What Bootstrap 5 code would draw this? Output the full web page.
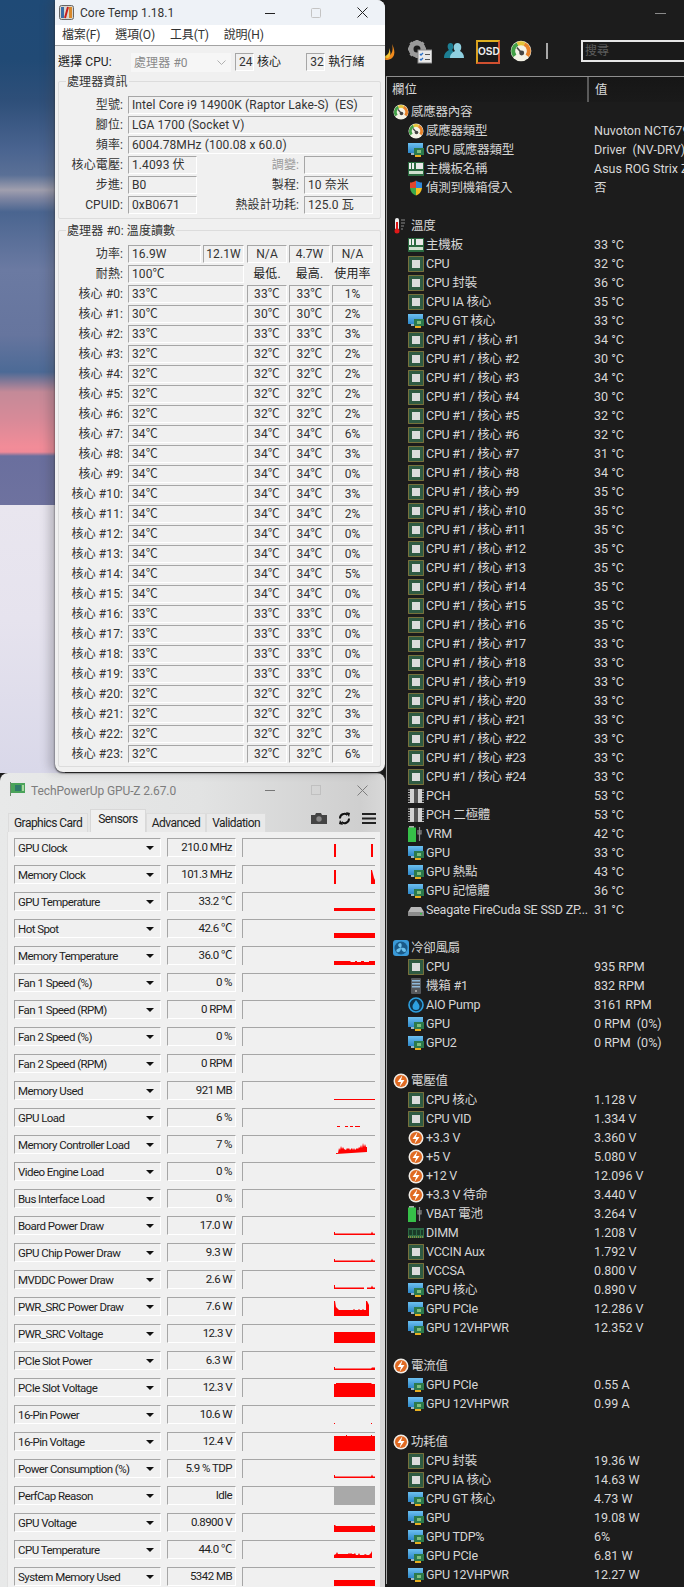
<!DOCTYPE html>
<html lang="zh-Hant">
<head>
<meta charset="utf-8">
<title>Core Temp / GPU-Z / HWiNFO</title>
<link href="https://cdn.jsdelivr.net/npm/bootstrap@5.3.0/dist/css/bootstrap.min.css" rel="stylesheet">
<style>
html,body{margin:0;height:1587px;overflow:hidden;background:#1c1c1c}
body{font-family:Roboto,"Noto Sans CJK TC",sans-serif;font-size:12px;line-height:18px;color:#222}
.svg-defs{position:absolute;width:0;height:0}
.desk{width:684px;height:1587px;overflow:hidden}
.leftcol{width:385px;flex:none;background-color:#1c1c1c;
 background-image:linear-gradient(180deg,#1f4a76 0,#214a75 60px,#2e4f79 100px,#4a6490 150px,#5a7096 175px,#a09fae 190px,#7f86a2 198px,#4a6590 212px,#6b7aa2 270px,#66759e 335px,#4c6a96 372px,#c48a98 392px,#d88a98 420px,#f28c98 447px,#f08a98 452px,#6a6f9e 456px,#6e729f 505px,#e9e6ef 505px,#e6e3ee 620px,#d9d8e9 773px);
 background-size:65px 773px;background-repeat:no-repeat}
/* Core Temp */
.ct-win{margin-left:55px;width:330px;height:772px;flex:none;background:#f0f0f0;border-radius:0 0 8px 8px;border-top-right-radius:8px;box-shadow:-6px 0 10px rgba(60,60,70,.28),0 1px 2px #222;overflow:hidden;position:relative;z-index:1;letter-spacing:.1px}
.ct-title{height:25px;background:#eef2f7;padding-left:4px}
.ct-title .ttl{margin-left:6px;font-size:12px;color:#333;letter-spacing:0}
.winbtn{width:46px;height:25px}
.ct-menu{height:21px;background:#fff;border-bottom:1px solid #a3a3a3;padding-left:7px;gap:15px;color:#333;letter-spacing:-.15px}
.cpu-sel{padding:7px 0 0 3px;height:36px}
.ctl-name{width:73px}
.fake-select{width:100px;height:19px;background:#f6f6f6;color:#8a8a8a;padding-left:3px;margin-right:4px}
.fake-select svg{margin-right:5px}
.sk{background:#f0f0f0;border-top:1px solid #a6a6a6;border-left:1px solid #a6a6a6;border-bottom:1px solid #fff;border-right:1px solid #fff;height:18px;line-height:16px;white-space:nowrap;overflow:hidden;padding-left:3px;color:#333}
.mini{width:19px;margin-right:3px;padding-left:3px}
.grp{border:1px solid #dcdcdc;border-radius:2px;margin:0 4px 0 3px;width:323px}
.grp-a{height:138px;margin-top:-1px}
.grp-b{height:537px;margin-top:11px}
.legend-t{display:block;width:max-content;margin:-9px 0 0 7px;padding:0 1px;background:#f0f0f0;height:18px;color:#333}
.ct-row{display:flex;height:18px;margin-bottom:2px}
.ct-rows-a{padding-top:5px}
.ct-rows-b{padding-top:5px}
.ct-lab{width:64px;text-align:right;margin-right:5px;flex:none;white-space:nowrap;color:#333}
.w245{width:245px}.w69{width:69px}.w116{width:116px}.w73{width:73px}.w41{width:41px}.w40{width:40px}
.gl3{margin-left:3px}.gl2{margin-left:2px}
.rlab{width:107px;text-align:right;padding-right:5px;color:#333}
.ctr{text-align:center;padding-left:0}
.plain{background:none;border:none;text-align:center;padding:0}
.dim{color:#9b9b9b}
.gap-thr{margin-left:25px}
/* GPU-Z */
.gz-win{width:385px;flex:none;margin-top:1px;height:814px;border-radius:8px 8px 0 0;background:linear-gradient(90deg,#e8e9e9 0,#e2e3e3 200px,#cfcfcf 360px,#d8d8d8 385px);overflow:hidden;position:relative;font-size:11.5px;letter-spacing:-.55px}
.gz-title{height:36px;padding:9px 0 0 10px;color:#7d7d7d;font-size:12px;letter-spacing:-.1px}
.gz-title .ttl{margin-left:6px}
.gz-title .ctl{margin-left:auto}
.gz-title .wb{width:46px;height:16px;display:flex;justify-content:center;align-items:center}
.gz-tabs{height:23px;padding-left:8px;border:none;align-items:flex-end;flex-wrap:nowrap}
.gz-tabs .nav-link{padding:0 5px;height:19px;border:1px solid #dcdcdc;border-bottom:none;border-radius:0;background:#e9e9e9;color:#222;margin:0;font-size:12px;line-height:18px}
.gz-tabs .nav-link.active{height:23px;line-height:19px;background:#f0f0f0;color:#222;border-color:#d8d8d8;padding:0 7px;margin-left:2px}
.gz-tabs .tab-w{padding:0 5px}
.gz-tools{margin-left:auto;gap:11px;padding-right:9px;height:23px;padding-bottom:5px}
.gz-panel{margin:0 5px 0 7px;height:760px;background:#f0f0f0;padding:6px 0 0 6px;border-left:1px solid #e0e0e0}
.gz-row{display:flex;height:19px;margin-bottom:8px}
.gb{background:#f0f0f0;border-top:1px solid #a6a6a6;border-left:1px solid #a6a6a6;border-bottom:1px solid #fff;border-right:1px solid #fff;height:19px;line-height:16px;white-space:nowrap;overflow:hidden;color:#222}
.gb-l{width:147px;padding:0 6px 0 3px;display:flex;align-items:center;justify-content:space-between}
.gb-v{width:69px;margin-left:6px;text-align:right;padding-right:3px}
.gb-g{width:133px;margin-left:6px;border-right:none;border-bottom:none}
.gb-g svg{display:block}
.tri{width:0;height:0;border-left:4px solid transparent;border-right:4px solid transparent;border-top:4px solid #111;flex:none}
/* HW panel */
.hw{width:299px;flex:none;background:#1c1c1c;color:#d8d8d8;overflow:hidden;height:1587px;font-size:12.5px}
.hw-min{height:40px;padding:12px 18px 0 0;justify-content:flex-end}
.hw-tool{height:36px}
.hw-tool svg{flex:none;display:block}
.tool-gear{margin-left:13px}
.tool-team{margin-left:12px}
.tool-gauge{margin-left:10px}
.tool-osd{width:24px;height:24px;margin-left:12px;border:2px solid;border-color:#e0b020 #d05030 #d05030 #d8a020;background:#1a1a1a;color:#eee;font-family:"Liberation Sans",sans-serif;font-weight:700;font-size:10px;line-height:20px;text-align:center}
.tool-sep{width:2px;height:16px;background:#a8a8a8;margin:3px 0 0 14px}
.hw-search{width:103px;height:22px;min-height:0;margin-left:33px;padding:0 2px;background:#1a1a1a;border:2px solid #e6e6e6;border-right:none;border-radius:0;font-size:12px;color:#888;font-family:inherit}
.hw-search::placeholder{color:#5c5c5c;opacity:1}
.hw-list{margin-left:1px;border-left:1px solid #a8a8a8;border-top:1px solid #8e8e8e}
.hw-head{height:25px;background:linear-gradient(#161616,#1a1a1a);line-height:25px}
.hw-head .c1{width:202px;padding-left:5px;border-right:2px solid #5a5a5a}
.hw-head .c2{padding-left:6px}
.hw-row{display:flex;height:19px;line-height:19px;white-space:nowrap}
.hw-n{width:207px;flex:none;display:flex;align-items:center;padding-left:21px;overflow:hidden;color:#d6d6d6;letter-spacing:-.22px}
.hw-n svg{width:16px;height:16px;margin-right:2px;flex:none}
.hw-g .hw-n{padding-left:6px}
.hw-v{color:#d8d8d8}
</style>
</head>
<body>
<svg class="svg-defs" aria-hidden="true">
<defs>
<linearGradient id="gm" x1="0" y1="0" x2="0" y2="1"><stop offset="0" stop-color="#6cc0f0"/><stop offset="1" stop-color="#2c86c8"/></linearGradient>
</defs>
<symbol id="i-cpu" viewBox="0 0 16 16"><rect x=".5" y=".5" width="15" height="15" fill="#2f5a42" stroke="#c9a84a" stroke-dasharray="1 1"/><rect x="4" y="4" width="8" height="8" fill="#dcdcdc"/></symbol>
<symbol id="i-gpu" viewBox="0 0 16 16"><rect x="0" y="1" width="15" height="10" fill="url(#gm)"/><rect x="3" y="11" width="5" height="2" fill="#9db4c4"/><rect x="6" y="6" width="10" height="7" fill="#2c7a4c"/><rect x="9" y="8" width="4" height="3" fill="#7fbf7f"/><rect x="7" y="13" width="6" height="2" fill="#e8b020"/></symbol>
<symbol id="i-mobo" viewBox="0 0 16 16"><rect y="1" width="16" height="14" fill="#2b6a40"/><rect x="1" y="2" width="2" height="6" fill="#eee"/><rect x="4" y="2" width="2" height="6" fill="#eee"/><rect x="8" y="2" width="7" height="6" fill="#e8e8e8"/><rect x="1" y="10" width="14" height="3" fill="#cfe0cf"/></symbol>
<symbol id="i-sensor" viewBox="0 0 16 16"><circle cx="8" cy="8" r="7.500" fill="#f4f2e6"/><path d="M3.500 11.500A5.600 5.600 0 0 1 5.500 3" fill="none" stroke="#43a047" stroke-width="2.800"/><path d="M5.500 3a5.600 5.600 0 0 1 5 0" fill="none" stroke="#e4c43a" stroke-width="2.800"/><path d="M10.500 3a5.600 5.600 0 0 1 2 8.500" fill="none" stroke="#e8832a" stroke-width="2.800"/><path d="M8.500 9.500 5 5.500" stroke="#444" stroke-width="1.200"/><circle cx="8.500" cy="9.500" r="1.800" fill="#444"/></symbol>
<symbol id="i-shield" viewBox="0 0 16 16"><path d="M2 2.500c2 0 4-.6 6-2v7.500H2z" fill="#e2452c"/><path d="M8 .5c2 1.400 4 2 6 2V8H8z" fill="#2f86d8"/><path d="M2 8h6v7.500C5 14.500 2.500 12 2 8z" fill="#3aa84a"/><path d="M8 8h6c-.5 4-3 6.500-6 7.500z" fill="#f2c020"/></symbol>
<symbol id="i-therm" viewBox="0 0 16 16"><rect x="2" y="0" width="4" height="12" rx="2" fill="#eee"/><rect x="3" y="4" width="2" height="9" fill="#e01818"/><circle cx="4" cy="13" r="2.500" fill="#e01818"/><path d="M8 2h4M8 5h4M8 8h3M8 11h2" stroke="#888" stroke-width="1"/></symbol>
<symbol id="i-pch" viewBox="0 0 16 16"><path d="M0 2h16M0 4.500h16M0 7h16M0 9.500h16M0 12h16M0 14.500h16" stroke="#bbb"/><rect x="2" y="1" width="12" height="14" fill="#d2d2d2"/><rect x="6" y="1" width="4" height="14" fill="#555"/></symbol>
<symbol id="i-batt" viewBox="0 0 16 16"><rect x="1" y="0" width="5" height="2" fill="#aaa"/><rect x="0" y="1.500" width="8" height="14.500" fill="#36c048"/><path d="M11.500 1v14M10 4v4h3V4" stroke="#8a8a8a" stroke-width="1.200" fill="none"/></symbol>
<symbol id="i-fan" viewBox="0 0 16 16"><rect width="16" height="16" rx="3" fill="#3a9ad8"/><circle cx="8" cy="8" r="6.500" fill="#1a5a88"/><path d="M8 8C5 7 4 4 7 3c2 0 2 3 1 5zM8 8c3-1 5 0 5 3-1 2-4 1-5-3zM8 8c0 3-2 5-4 4-2-2 1-4 4-4z" fill="#6cc0ec"/></symbol>
<symbol id="i-case" viewBox="0 0 16 16"><rect x="3" y="0" width="10" height="16" rx="1" fill="#55585c"/><rect x="4" y="2" width="8" height="1.500" fill="#8fb8d8"/><rect x="4" y="5" width="8" height="1.500" fill="#8fb8d8"/><rect x="4" y="8" width="8" height="1.500" fill="#8fb8d8"/><circle cx="8" cy="13" r="1" fill="#bbb"/></symbol>
<symbol id="i-drop" viewBox="0 0 16 16"><circle cx="8" cy="8" r="7" fill="#11334a" stroke="#2ea0e0" stroke-width="1.600"/><path d="M8 3c2 3 3.500 4.500 3.500 6.500a3.500 3.500 0 0 1-7 0C4.500 7.500 6 6 8 3z" fill="#2ea0e0"/></symbol>
<symbol id="i-ssd" viewBox="0 0 16 16"><path d="M3 5h10l3 5v4H0v-4z" fill="#b8b8b8"/><rect x="0" y="10" width="16" height="4" fill="#8c8c8c"/><rect x="12" y="11" width="2" height="1.500" fill="#36c048"/></symbol>
<symbol id="i-volt" viewBox="0 0 16 16"><circle cx="8" cy="8" r="7.500" fill="#f0ece6"/><circle cx="8" cy="8" r="6" fill="#e06a22"/><path d="M9.500 2 4.500 9H8l-1.500 5 5-7H8z" fill="#fff"/></symbol>
<symbol id="i-dimm" viewBox="0 0 16 16"><rect y="3" width="16" height="10" fill="#2c6a44"/><path d="M1 5h3v5H1zM5 5h3v5H5zM9 5h3v5H9zM13 5h2v5h-2z" fill="#1a3a28"/><path d="M0 12h16" stroke="#d4b040" stroke-dasharray="1 1"/></symbol>
</svg>

<main class="desk d-flex">
<div class="leftcol d-flex flex-column">

<section class="ct-win d-flex flex-column">
 <div class="ct-title d-flex align-items-center">
  <svg width="15" height="15" viewBox="0 0 15 15" aria-hidden="true"><rect x=".5" y=".5" width="14" height="14" rx="2" fill="#d9d4cc" stroke="#666"/><rect x="2" y="2" width="3" height="11" fill="#3b6ea8"/><rect x="10" y="2" width="3" height="11" fill="#d8882a"/><path d="M6 13 9 2" stroke="#c81e1e" stroke-width="2"/></svg>
  <span class="ttl">Core Temp 1.18.1</span>
  <div class="ms-auto d-flex">
   <div class="winbtn d-flex align-items-center justify-content-center"><svg width="10" height="10" aria-hidden="true"><path d="M0 5.500h10" stroke="#222"/></svg></div>
   <div class="winbtn d-flex align-items-center justify-content-center"><svg width="10" height="10" aria-hidden="true"><rect x=".5" y=".5" width="9" height="9" rx="1" fill="none" stroke="#c4c4c4"/></svg></div>
   <div class="winbtn d-flex align-items-center justify-content-center"><svg width="11" height="11" aria-hidden="true"><path d="M.5.500l10 10M10.500.500l-10 10" stroke="#222"/></svg></div>
  </div>
 </div>
 <nav class="ct-menu d-flex align-items-center"><span>檔案(F)</span><span>選項(O)</span><span>工具(T)</span><span>說明(H)</span></nav>
 <div class="cpu-sel d-flex">
  <span class="ctl-name">選擇 CPU:</span>
  <div class="fake-select d-flex align-items-center justify-content-between"><span>處理器 #0</span><svg width="9" height="6" aria-hidden="true"><path d="M.5.500 4.500 4.500 8.500.500" fill="none" stroke="#b0b0b0"/></svg></div>
  <div class="sk mini">24</div><span>核心</span>
  <div class="sk mini gap-thr">32</div><span>執行緒</span>
 </div>
 <div class="grp grp-a">
  <span class="legend-t">處理器資訊</span>
  <div class="ct-rows-a">
  <div class="ct-row"><span class="ct-lab">型號:</span><div class="sk w245">Intel Core i9 14900K (Raptor Lake-S)&nbsp; (ES)</div></div>
  <div class="ct-row"><span class="ct-lab">腳位:</span><div class="sk w245">LGA 1700 (Socket V)</div></div>
  <div class="ct-row"><span class="ct-lab">頻率:</span><div class="sk w245">6004.78MHz (100.08 x 60.0)</div></div>
  <div class="ct-row"><span class="ct-lab">核心電壓:</span><div class="sk w69">1.4093 伏</div><span class="rlab dim">調變:</span><div class="sk w69"></div></div>
  <div class="ct-row"><span class="ct-lab">步進:</span><div class="sk w69">B0</div><span class="rlab">製程:</span><div class="sk w69">10 奈米</div></div>
  <div class="ct-row"><span class="ct-lab">CPUID:</span><div class="sk w69">0xB0671</div><span class="rlab">熱設計功耗:</span><div class="sk w69">125.0 瓦</div></div>
  </div>
 </div>
 <div class="grp grp-b">
  <span class="legend-t">處理器 #0: 溫度讀數</span>
  <div class="ct-rows-b">
  <div class="ct-row"><span class="ct-lab">功率:</span><div class="sk w73">16.9W</div><div class="sk w41 gl2 ctr">12.1W</div><div class="sk w40 gl3 ctr">N/A</div><div class="sk w41 gl2 ctr">4.7W</div><div class="sk w41 gl2 ctr">N/A</div></div>
  <div class="ct-row"><span class="ct-lab">耐熱:</span><div class="sk w116">100℃</div><div class="plain w40 gl3">最低.</div><div class="plain w41 gl2">最高.</div><div class="plain w41 gl2">使用率</div></div>
  <div class="ct-row"><span class="ct-lab">核心 #0:</span><div class="sk w116">33℃</div><div class="sk w40 gl3 ctr">33℃</div><div class="sk w41 gl2 ctr">33℃</div><div class="sk w41 gl2 ctr">1%</div></div>
  <div class="ct-row"><span class="ct-lab">核心 #1:</span><div class="sk w116">30℃</div><div class="sk w40 gl3 ctr">30℃</div><div class="sk w41 gl2 ctr">30℃</div><div class="sk w41 gl2 ctr">2%</div></div>
  <div class="ct-row"><span class="ct-lab">核心 #2:</span><div class="sk w116">33℃</div><div class="sk w40 gl3 ctr">33℃</div><div class="sk w41 gl2 ctr">33℃</div><div class="sk w41 gl2 ctr">3%</div></div>
  <div class="ct-row"><span class="ct-lab">核心 #3:</span><div class="sk w116">32℃</div><div class="sk w40 gl3 ctr">32℃</div><div class="sk w41 gl2 ctr">32℃</div><div class="sk w41 gl2 ctr">2%</div></div>
  <div class="ct-row"><span class="ct-lab">核心 #4:</span><div class="sk w116">32℃</div><div class="sk w40 gl3 ctr">32℃</div><div class="sk w41 gl2 ctr">32℃</div><div class="sk w41 gl2 ctr">2%</div></div>
  <div class="ct-row"><span class="ct-lab">核心 #5:</span><div class="sk w116">32℃</div><div class="sk w40 gl3 ctr">32℃</div><div class="sk w41 gl2 ctr">32℃</div><div class="sk w41 gl2 ctr">2%</div></div>
  <div class="ct-row"><span class="ct-lab">核心 #6:</span><div class="sk w116">32℃</div><div class="sk w40 gl3 ctr">32℃</div><div class="sk w41 gl2 ctr">32℃</div><div class="sk w41 gl2 ctr">2%</div></div>
  <div class="ct-row"><span class="ct-lab">核心 #7:</span><div class="sk w116">34℃</div><div class="sk w40 gl3 ctr">34℃</div><div class="sk w41 gl2 ctr">34℃</div><div class="sk w41 gl2 ctr">6%</div></div>
  <div class="ct-row"><span class="ct-lab">核心 #8:</span><div class="sk w116">34℃</div><div class="sk w40 gl3 ctr">34℃</div><div class="sk w41 gl2 ctr">34℃</div><div class="sk w41 gl2 ctr">3%</div></div>
  <div class="ct-row"><span class="ct-lab">核心 #9:</span><div class="sk w116">34℃</div><div class="sk w40 gl3 ctr">34℃</div><div class="sk w41 gl2 ctr">34℃</div><div class="sk w41 gl2 ctr">0%</div></div>
  <div class="ct-row"><span class="ct-lab">核心 #10:</span><div class="sk w116">34℃</div><div class="sk w40 gl3 ctr">34℃</div><div class="sk w41 gl2 ctr">34℃</div><div class="sk w41 gl2 ctr">3%</div></div>
  <div class="ct-row"><span class="ct-lab">核心 #11:</span><div class="sk w116">34℃</div><div class="sk w40 gl3 ctr">34℃</div><div class="sk w41 gl2 ctr">34℃</div><div class="sk w41 gl2 ctr">2%</div></div>
  <div class="ct-row"><span class="ct-lab">核心 #12:</span><div class="sk w116">34℃</div><div class="sk w40 gl3 ctr">34℃</div><div class="sk w41 gl2 ctr">34℃</div><div class="sk w41 gl2 ctr">0%</div></div>
  <div class="ct-row"><span class="ct-lab">核心 #13:</span><div class="sk w116">34℃</div><div class="sk w40 gl3 ctr">34℃</div><div class="sk w41 gl2 ctr">34℃</div><div class="sk w41 gl2 ctr">0%</div></div>
  <div class="ct-row"><span class="ct-lab">核心 #14:</span><div class="sk w116">34℃</div><div class="sk w40 gl3 ctr">34℃</div><div class="sk w41 gl2 ctr">34℃</div><div class="sk w41 gl2 ctr">5%</div></div>
  <div class="ct-row"><span class="ct-lab">核心 #15:</span><div class="sk w116">34℃</div><div class="sk w40 gl3 ctr">34℃</div><div class="sk w41 gl2 ctr">34℃</div><div class="sk w41 gl2 ctr">0%</div></div>
  <div class="ct-row"><span class="ct-lab">核心 #16:</span><div class="sk w116">33℃</div><div class="sk w40 gl3 ctr">33℃</div><div class="sk w41 gl2 ctr">33℃</div><div class="sk w41 gl2 ctr">0%</div></div>
  <div class="ct-row"><span class="ct-lab">核心 #17:</span><div class="sk w116">33℃</div><div class="sk w40 gl3 ctr">33℃</div><div class="sk w41 gl2 ctr">33℃</div><div class="sk w41 gl2 ctr">0%</div></div>
  <div class="ct-row"><span class="ct-lab">核心 #18:</span><div class="sk w116">33℃</div><div class="sk w40 gl3 ctr">33℃</div><div class="sk w41 gl2 ctr">33℃</div><div class="sk w41 gl2 ctr">0%</div></div>
  <div class="ct-row"><span class="ct-lab">核心 #19:</span><div class="sk w116">33℃</div><div class="sk w40 gl3 ctr">33℃</div><div class="sk w41 gl2 ctr">33℃</div><div class="sk w41 gl2 ctr">0%</div></div>
  <div class="ct-row"><span class="ct-lab">核心 #20:</span><div class="sk w116">32℃</div><div class="sk w40 gl3 ctr">32℃</div><div class="sk w41 gl2 ctr">32℃</div><div class="sk w41 gl2 ctr">2%</div></div>
  <div class="ct-row"><span class="ct-lab">核心 #21:</span><div class="sk w116">32℃</div><div class="sk w40 gl3 ctr">32℃</div><div class="sk w41 gl2 ctr">32℃</div><div class="sk w41 gl2 ctr">3%</div></div>
  <div class="ct-row"><span class="ct-lab">核心 #22:</span><div class="sk w116">32℃</div><div class="sk w40 gl3 ctr">32℃</div><div class="sk w41 gl2 ctr">32℃</div><div class="sk w41 gl2 ctr">3%</div></div>
  <div class="ct-row"><span class="ct-lab">核心 #23:</span><div class="sk w116">32℃</div><div class="sk w40 gl3 ctr">32℃</div><div class="sk w41 gl2 ctr">32℃</div><div class="sk w41 gl2 ctr">6%</div></div>
  </div>
 </div>
</section>

<section class="gz-win">
 <div class="gz-title d-flex">
  <svg width="15" height="14" viewBox="0 0 15 14" aria-hidden="true"><rect x="1" y="1" width="14" height="10" fill="#4aa35a"/><rect x="5" y="3" width="6" height="6" fill="#2f7a6a"/><rect x="12" y="3" width="2" height="6" fill="#a8d8a0"/><rect y="0" width="1" height="14" fill="#6a8a6a"/></svg>
  <span class="ttl">TechPowerUp GPU-Z 2.67.0</span>
  <div class="ctl d-flex">
   <div class="wb"><svg width="10" height="3" aria-hidden="true"><path d="M0 1.500h10" stroke="#777"/></svg></div>
   <div class="wb"><svg width="10" height="10" aria-hidden="true"><rect x=".5" y=".5" width="9" height="9" fill="none" stroke="#c0c0c0"/></svg></div>
   <div class="wb"><svg width="11" height="11" aria-hidden="true"><path d="M.5.500l10 10M10.500.500l-10 10" stroke="#7d7d7d"/></svg></div>
  </div>
 </div>
 <div class="d-flex">
  <ul class="nav nav-tabs gz-tabs">
   <li class="nav-item"><a class="nav-link" href="#">Graphics Card</a></li>
   <li class="nav-item"><a class="nav-link active" href="#">Sensors</a></li>
   <li class="nav-item"><a class="nav-link tab-w" href="#">Advanced</a></li>
   <li class="nav-item"><a class="nav-link tab-w" href="#">Validation</a></li>
  </ul>
  <div class="gz-tools d-flex align-items-center">
   <svg width="16" height="11" viewBox="0 0 16 11" aria-hidden="true"><path d="M0 2h4l1-2h5l1 2h5v9H0z" fill="#444"/><circle cx="8" cy="6" r="2.700" fill="#888"/></svg>
   <svg width="13" height="13" viewBox="0 0 13 13" aria-hidden="true"><path d="M2 6.500A4.500 4.500 0 0 1 9.500 3M11 6.500A4.500 4.500 0 0 1 3.500 10" fill="none" stroke="#111" stroke-width="2"/><path d="M8 0l4 1-1 4zM5 13 1 12l1-4z" fill="#111"/></svg>
   <svg width="14" height="11" viewBox="0 0 14 11" aria-hidden="true"><path d="M0 1h14M0 5.500h14M0 10h14" stroke="#222" stroke-width="2"/></svg>
  </div>
 </div>
 <div class="gz-panel">
  <div class="gz-row"><div class="gb gb-l"><span>GPU Clock</span><i class="tri"></i></div><div class="gb gb-v">210.0 MHz</div><div class="gb gb-g"><svg width="132" height="18" aria-hidden="true"><path d="M91 5h2v13h-2zM128 5h2v13h-2z" fill="#f00"/></svg></div></div>
  <div class="gz-row"><div class="gb gb-l"><span>Memory Clock</span><i class="tri"></i></div><div class="gb gb-v">101.3 MHz</div><div class="gb gb-g"><svg width="132" height="18" aria-hidden="true"><path d="M91 4h2v14h-2zM128 4h1l2 8 1 2v4h-4z" fill="#f00"/></svg></div></div>
  <div class="gz-row"><div class="gb gb-l"><span>GPU Temperature</span><i class="tri"></i></div><div class="gb gb-v">33.2 ℃</div><div class="gb gb-g"><svg width="132" height="18" aria-hidden="true"><rect x="91" y="15" width="41" height="3" fill="#f00"/></svg></div></div>
  <div class="gz-row"><div class="gb gb-l"><span>Hot Spot</span><i class="tri"></i></div><div class="gb gb-v">42.6 ℃</div><div class="gb gb-g"><svg width="132" height="18" aria-hidden="true"><rect x="91" y="13" width="41" height="5" fill="#f00"/></svg></div></div>
  <div class="gz-row"><div class="gb gb-l"><span>Memory Temperature</span><i class="tri"></i></div><div class="gb gb-v">36.0 ℃</div><div class="gb gb-g"><svg width="132" height="18" aria-hidden="true"><path d="M91 14h16l1 1h4v-1h2v1h4v-1h3v1h5v-1h6v4H91z" fill="#f00"/></svg></div></div>
  <div class="gz-row"><div class="gb gb-l"><span>Fan 1 Speed (%)</span><i class="tri"></i></div><div class="gb gb-v">0 %</div><div class="gb gb-g"></div></div>
  <div class="gz-row"><div class="gb gb-l"><span>Fan 1 Speed (RPM)</span><i class="tri"></i></div><div class="gb gb-v">0 RPM</div><div class="gb gb-g"></div></div>
  <div class="gz-row"><div class="gb gb-l"><span>Fan 2 Speed (%)</span><i class="tri"></i></div><div class="gb gb-v">0 %</div><div class="gb gb-g"></div></div>
  <div class="gz-row"><div class="gb gb-l"><span>Fan 2 Speed (RPM)</span><i class="tri"></i></div><div class="gb gb-v">0 RPM</div><div class="gb gb-g"></div></div>
  <div class="gz-row"><div class="gb gb-l"><span>Memory Used</span><i class="tri"></i></div><div class="gb gb-v">921 MB</div><div class="gb gb-g"><svg width="132" height="18" aria-hidden="true"><rect x="91" y="17" width="41" height="1" fill="#f00"/></svg></div></div>
  <div class="gz-row"><div class="gb gb-l"><span>GPU Load</span><i class="tri"></i></div><div class="gb gb-v">6 %</div><div class="gb gb-g"><svg width="132" height="18" aria-hidden="true"><path d="M94 17h3v1h-3zM102 17h3v1h-3zM107 17h3v1h-3zM112 17h5v1h-5z" fill="#f00"/></svg></div></div>
  <div class="gz-row"><div class="gb gb-l"><span>Memory Controller Load</span><i class="tri"></i></div><div class="gb gb-v">7 %</div><div class="gb gb-g"><svg width="132" height="18" aria-hidden="true"><path d="M93 18v-1h2l1-5 1 2 1-4 1 3 1-2 1 2 2 1 1-2 1 1 1-1 1 2 2-2 1 2 1-2 1 2 2-2 1 1 1-2 1 1 1-3 1 3 1-5 1 4 1-3 1 3h1v5z" fill="#f00"/></svg></div></div>
  <div class="gz-row"><div class="gb gb-l"><span>Video Engine Load</span><i class="tri"></i></div><div class="gb gb-v">0 %</div><div class="gb gb-g"></div></div>
  <div class="gz-row"><div class="gb gb-l"><span>Bus Interface Load</span><i class="tri"></i></div><div class="gb gb-v">0 %</div><div class="gb gb-g"></div></div>
  <div class="gz-row"><div class="gb gb-l"><span>Board Power Draw</span><i class="tri"></i></div><div class="gb gb-v">17.0 W</div><div class="gb gb-g"><svg width="132" height="18" aria-hidden="true"><path d="M91 15h1v1.500h36l1-2 1 2h2V18H91z" fill="#f00"/></svg></div></div>
  <div class="gz-row"><div class="gb gb-l"><span>GPU Chip Power Draw</span><i class="tri"></i></div><div class="gb gb-v">9.3 W</div><div class="gb gb-g"><svg width="132" height="18" aria-hidden="true"><path d="M91 15h1v1.500h36l1-2 1 2h2V18H91z" fill="#f00"/></svg></div></div>
  <div class="gz-row"><div class="gb gb-l"><span>MVDDC Power Draw</span><i class="tri"></i></div><div class="gb gb-v">2.6 W</div><div class="gb gb-g"><svg width="132" height="18" aria-hidden="true"><path d="M91 14h1v2.500h29V18H91zM124 16.500h4l1-2 1 2h2V18h-8z" fill="#f00"/></svg></div></div>
  <div class="gz-row"><div class="gb gb-l"><span>PWR_SRC Power Draw</span><i class="tri"></i></div><div class="gb gb-v">7.6 W</div><div class="gb gb-g"><svg width="132" height="18" aria-hidden="true"><path d="M91 3h1l1 6 2 2 1 1h14l1-1 1 1h3l1-1 1 1h2l1-1 1 1h2V3h1l2 4v11H91z" fill="#f00"/></svg></div></div>
  <div class="gz-row"><div class="gb gb-l"><span>PWR_SRC Voltage</span><i class="tri"></i></div><div class="gb gb-v">12.3 V</div><div class="gb gb-g"><svg width="132" height="18" aria-hidden="true"><rect x="91" y="7" width="41" height="11" fill="#f00"/></svg></div></div>
  <div class="gz-row"><div class="gb gb-l"><span>PCIe Slot Power</span><i class="tri"></i></div><div class="gb gb-v">6.3 W</div><div class="gb gb-g"><svg width="132" height="18" aria-hidden="true"><path d="M91 15h1v1.500h36l1-1h3V18H91z" fill="#f00"/></svg></div></div>
  <div class="gz-row"><div class="gb gb-l"><span>PCIe Slot Voltage</span><i class="tri"></i></div><div class="gb gb-v">12.3 V</div><div class="gb gb-g"><svg width="132" height="18" aria-hidden="true"><path d="M91 5h2V4h35l1 1h3v13H91z" fill="#f00"/></svg></div></div>
  <div class="gz-row"><div class="gb gb-l"><span>16-Pin Power</span><i class="tri"></i></div><div class="gb gb-v">10.6 W</div><div class="gb gb-g"><svg width="132" height="18" aria-hidden="true"><path d="M91 17h1v1h-1zM128 17h1v1h-1z" fill="#f00"/></svg></div></div>
  <div class="gz-row"><div class="gb gb-l"><span>16-Pin Voltage</span><i class="tri"></i></div><div class="gb gb-v">12.4 V</div><div class="gb gb-g"><svg width="132" height="18" aria-hidden="true"><path d="M91 3h12V2h1v1h24V2h1v1h3v15H91z" fill="#f00"/></svg></div></div>
  <div class="gz-row"><div class="gb gb-l"><span>Power Consumption (%)</span><i class="tri"></i></div><div class="gb gb-v">5.9 % TDP</div><div class="gb gb-g"><svg width="132" height="18" aria-hidden="true"><path d="M91 15h1v1.500h36l1-2 1 2h2V18H91z" fill="#f00"/></svg></div></div>
  <div class="gz-row"><div class="gb gb-l"><span>PerfCap Reason</span><i class="tri"></i></div><div class="gb gb-v">Idle</div><div class="gb gb-g"><svg width="132" height="18" aria-hidden="true"><rect x="91" y="0" width="41" height="18" fill="#a9a9a9"/></svg></div></div>
  <div class="gz-row"><div class="gb gb-l"><span>GPU Voltage</span><i class="tri"></i></div><div class="gb gb-v">0.8900 V</div><div class="gb gb-g"><svg width="132" height="18" aria-hidden="true"><path d="M91 11h1l1 1h35l1-1 1 1h2v6H91z" fill="#f00"/></svg></div></div>
  <div class="gz-row"><div class="gb gb-l"><span>CPU Temperature</span><i class="tri"></i></div><div class="gb gb-v">44.0 ℃</div><div class="gb gb-g"><svg width="132" height="18" aria-hidden="true"><path d="M91 14l2-1 1-2 1 2h10l1-1 1 1 1-1 1 1h2l1-1 1 2h2l1-2 1 2h4l1-1 2 1h2l2-2 1-2v7H91z" fill="#f00"/></svg></div></div>
  <div class="gz-row"><div class="gb gb-l"><span>System Memory Used</span><i class="tri"></i></div><div class="gb gb-v">5342 MB</div><div class="gb gb-g"><svg width="132" height="18" aria-hidden="true"><rect x="91" y="12" width="41" height="6" fill="#f00"/></svg></div></div>
 </div>
</section>
</div>

<section class="hw">
 <div class="hw-min d-flex"><svg width="11" height="3" aria-hidden="true"><path d="M0 1.500h11" stroke="#8a8a8a"/></svg></div>
 <div class="hw-tool d-flex align-items-start">
  <svg width="10" height="20" viewBox="0 0 10 20" aria-hidden="true"><path d="M0 18C6 16 9 12 7 4 9 8 10 12 9 15c-1 3-4 5-9 5z" fill="#f08a1c"/><path d="M0 16c3-1 5-4 4-8 2 4 2 8-1 10H0z" fill="#f4c430"/></svg>
  <svg class="tool-gear" width="24" height="24" viewBox="0 0 24 24" aria-hidden="true"><circle cx="9" cy="9" r="6" fill="none" stroke="#9a9a9a" stroke-width="5"/><path d="M9 0v3M9 15v3M0 9h3M15 9h3M2.500 2.500l2 2M13.500 13.500l2 2M2.500 15.500l2-2M15.500 2.500l-2 2" stroke="#9a9a9a" stroke-width="3"/><rect x="10" y="10" width="14" height="13" fill="#e8e8e8" stroke="#888"/><path d="M12 14l1 1 2-2M12 19l1 1 2-2" stroke="#2a70c8" stroke-width="1.300" fill="none"/><path d="M17 14.500h5M17 19.500h5" stroke="#555"/></svg>
  <svg class="tool-team" width="20" height="20" viewBox="0 0 20 20" aria-hidden="true"><path d="M5 10C3 8 3 3 6.500 3S10 8 8 10c1 1 3 2 3 8H0c0-5 3-7 5-8z" fill="#1d7f94"/><path d="M11 11c-2-2-2-8 2.500-8S18 9 16 11c2 1 4 3 4 7H6c0-4 3-6 5-7z" fill="#8fd0e0"/></svg>
  <div class="tool-osd">OSD</div>
  <svg class="tool-gauge" width="22" height="22" viewBox="0 0 16 16" aria-hidden="true"><use href="#i-sensor"/></svg>
  <div class="tool-sep"></div>
  <input class="form-control hw-search" placeholder="搜尋" aria-label="搜尋">
 </div>
 <div class="hw-list">
  <div class="hw-head d-flex"><div class="c1">欄位</div><div class="c2">值</div></div>
  <div class="hw-row hw-g"><div class="hw-n"><svg><use href="#i-sensor"/></svg>感應器內容</div></div>
  <div class="hw-row"><div class="hw-n"><svg><use href="#i-sensor"/></svg>感應器類型</div><div class="hw-v">Nuvoton NCT6798D</div></div>
  <div class="hw-row"><div class="hw-n"><svg><use href="#i-gpu"/></svg>GPU 感應器類型</div><div class="hw-v">Driver&nbsp; (NV-DRV)</div></div>
  <div class="hw-row"><div class="hw-n"><svg><use href="#i-mobo"/></svg>主機板名稱</div><div class="hw-v">Asus ROG Strix Z690-E</div></div>
  <div class="hw-row"><div class="hw-n"><svg><use href="#i-shield"/></svg>偵測到機箱侵入</div><div class="hw-v">否</div></div>
  <div class="hw-row"></div>
  <div class="hw-row hw-g"><div class="hw-n"><svg><use href="#i-therm"/></svg>溫度</div></div>
  <div class="hw-row"><div class="hw-n"><svg><use href="#i-mobo"/></svg>主機板</div><div class="hw-v">33 °C</div></div>
  <div class="hw-row"><div class="hw-n"><svg><use href="#i-cpu"/></svg>CPU</div><div class="hw-v">32 °C</div></div>
  <div class="hw-row"><div class="hw-n"><svg><use href="#i-cpu"/></svg>CPU 封裝</div><div class="hw-v">36 °C</div></div>
  <div class="hw-row"><div class="hw-n"><svg><use href="#i-cpu"/></svg>CPU IA 核心</div><div class="hw-v">35 °C</div></div>
  <div class="hw-row"><div class="hw-n"><svg><use href="#i-gpu"/></svg>CPU GT 核心</div><div class="hw-v">33 °C</div></div>
  <div class="hw-row"><div class="hw-n"><svg><use href="#i-cpu"/></svg>CPU #1 / 核心 #1</div><div class="hw-v">34 °C</div></div>
  <div class="hw-row"><div class="hw-n"><svg><use href="#i-cpu"/></svg>CPU #1 / 核心 #2</div><div class="hw-v">30 °C</div></div>
  <div class="hw-row"><div class="hw-n"><svg><use href="#i-cpu"/></svg>CPU #1 / 核心 #3</div><div class="hw-v">34 °C</div></div>
  <div class="hw-row"><div class="hw-n"><svg><use href="#i-cpu"/></svg>CPU #1 / 核心 #4</div><div class="hw-v">30 °C</div></div>
  <div class="hw-row"><div class="hw-n"><svg><use href="#i-cpu"/></svg>CPU #1 / 核心 #5</div><div class="hw-v">32 °C</div></div>
  <div class="hw-row"><div class="hw-n"><svg><use href="#i-cpu"/></svg>CPU #1 / 核心 #6</div><div class="hw-v">32 °C</div></div>
  <div class="hw-row"><div class="hw-n"><svg><use href="#i-cpu"/></svg>CPU #1 / 核心 #7</div><div class="hw-v">31 °C</div></div>
  <div class="hw-row"><div class="hw-n"><svg><use href="#i-cpu"/></svg>CPU #1 / 核心 #8</div><div class="hw-v">34 °C</div></div>
  <div class="hw-row"><div class="hw-n"><svg><use href="#i-cpu"/></svg>CPU #1 / 核心 #9</div><div class="hw-v">35 °C</div></div>
  <div class="hw-row"><div class="hw-n"><svg><use href="#i-cpu"/></svg>CPU #1 / 核心 #10</div><div class="hw-v">35 °C</div></div>
  <div class="hw-row"><div class="hw-n"><svg><use href="#i-cpu"/></svg>CPU #1 / 核心 #11</div><div class="hw-v">35 °C</div></div>
  <div class="hw-row"><div class="hw-n"><svg><use href="#i-cpu"/></svg>CPU #1 / 核心 #12</div><div class="hw-v">35 °C</div></div>
  <div class="hw-row"><div class="hw-n"><svg><use href="#i-cpu"/></svg>CPU #1 / 核心 #13</div><div class="hw-v">35 °C</div></div>
  <div class="hw-row"><div class="hw-n"><svg><use href="#i-cpu"/></svg>CPU #1 / 核心 #14</div><div class="hw-v">35 °C</div></div>
  <div class="hw-row"><div class="hw-n"><svg><use href="#i-cpu"/></svg>CPU #1 / 核心 #15</div><div class="hw-v">35 °C</div></div>
  <div class="hw-row"><div class="hw-n"><svg><use href="#i-cpu"/></svg>CPU #1 / 核心 #16</div><div class="hw-v">35 °C</div></div>
  <div class="hw-row"><div class="hw-n"><svg><use href="#i-cpu"/></svg>CPU #1 / 核心 #17</div><div class="hw-v">33 °C</div></div>
  <div class="hw-row"><div class="hw-n"><svg><use href="#i-cpu"/></svg>CPU #1 / 核心 #18</div><div class="hw-v">33 °C</div></div>
  <div class="hw-row"><div class="hw-n"><svg><use href="#i-cpu"/></svg>CPU #1 / 核心 #19</div><div class="hw-v">33 °C</div></div>
  <div class="hw-row"><div class="hw-n"><svg><use href="#i-cpu"/></svg>CPU #1 / 核心 #20</div><div class="hw-v">33 °C</div></div>
  <div class="hw-row"><div class="hw-n"><svg><use href="#i-cpu"/></svg>CPU #1 / 核心 #21</div><div class="hw-v">33 °C</div></div>
  <div class="hw-row"><div class="hw-n"><svg><use href="#i-cpu"/></svg>CPU #1 / 核心 #22</div><div class="hw-v">33 °C</div></div>
  <div class="hw-row"><div class="hw-n"><svg><use href="#i-cpu"/></svg>CPU #1 / 核心 #23</div><div class="hw-v">33 °C</div></div>
  <div class="hw-row"><div class="hw-n"><svg><use href="#i-cpu"/></svg>CPU #1 / 核心 #24</div><div class="hw-v">33 °C</div></div>
  <div class="hw-row"><div class="hw-n"><svg><use href="#i-pch"/></svg>PCH</div><div class="hw-v">53 °C</div></div>
  <div class="hw-row"><div class="hw-n"><svg><use href="#i-pch"/></svg>PCH 二極體</div><div class="hw-v">53 °C</div></div>
  <div class="hw-row"><div class="hw-n"><svg><use href="#i-batt"/></svg>VRM</div><div class="hw-v">42 °C</div></div>
  <div class="hw-row"><div class="hw-n"><svg><use href="#i-gpu"/></svg>GPU</div><div class="hw-v">33 °C</div></div>
  <div class="hw-row"><div class="hw-n"><svg><use href="#i-gpu"/></svg>GPU 熱點</div><div class="hw-v">43 °C</div></div>
  <div class="hw-row"><div class="hw-n"><svg><use href="#i-gpu"/></svg>GPU 記憶體</div><div class="hw-v">36 °C</div></div>
  <div class="hw-row"><div class="hw-n"><svg><use href="#i-ssd"/></svg>Seagate FireCuda SE SSD ZP...</div><div class="hw-v">31 °C</div></div>
  <div class="hw-row"></div>
  <div class="hw-row hw-g"><div class="hw-n"><svg><use href="#i-fan"/></svg>冷卻風扇</div></div>
  <div class="hw-row"><div class="hw-n"><svg><use href="#i-cpu"/></svg>CPU</div><div class="hw-v">935 RPM</div></div>
  <div class="hw-row"><div class="hw-n"><svg><use href="#i-case"/></svg>機箱 #1</div><div class="hw-v">832 RPM</div></div>
  <div class="hw-row"><div class="hw-n"><svg><use href="#i-drop"/></svg>AIO Pump</div><div class="hw-v">3161 RPM</div></div>
  <div class="hw-row"><div class="hw-n"><svg><use href="#i-gpu"/></svg>GPU</div><div class="hw-v">0 RPM&nbsp; (0%)</div></div>
  <div class="hw-row"><div class="hw-n"><svg><use href="#i-gpu"/></svg>GPU2</div><div class="hw-v">0 RPM&nbsp; (0%)</div></div>
  <div class="hw-row"></div>
  <div class="hw-row hw-g"><div class="hw-n"><svg><use href="#i-volt"/></svg>電壓值</div></div>
  <div class="hw-row"><div class="hw-n"><svg><use href="#i-cpu"/></svg>CPU 核心</div><div class="hw-v">1.128 V</div></div>
  <div class="hw-row"><div class="hw-n"><svg><use href="#i-cpu"/></svg>CPU VID</div><div class="hw-v">1.334 V</div></div>
  <div class="hw-row"><div class="hw-n"><svg><use href="#i-volt"/></svg>+3.3 V</div><div class="hw-v">3.360 V</div></div>
  <div class="hw-row"><div class="hw-n"><svg><use href="#i-volt"/></svg>+5 V</div><div class="hw-v">5.080 V</div></div>
  <div class="hw-row"><div class="hw-n"><svg><use href="#i-volt"/></svg>+12 V</div><div class="hw-v">12.096 V</div></div>
  <div class="hw-row"><div class="hw-n"><svg><use href="#i-volt"/></svg>+3.3 V 待命</div><div class="hw-v">3.440 V</div></div>
  <div class="hw-row"><div class="hw-n"><svg><use href="#i-batt"/></svg>VBAT 電池</div><div class="hw-v">3.264 V</div></div>
  <div class="hw-row"><div class="hw-n"><svg><use href="#i-dimm"/></svg>DIMM</div><div class="hw-v">1.208 V</div></div>
  <div class="hw-row"><div class="hw-n"><svg><use href="#i-cpu"/></svg>VCCIN Aux</div><div class="hw-v">1.792 V</div></div>
  <div class="hw-row"><div class="hw-n"><svg><use href="#i-cpu"/></svg>VCCSA</div><div class="hw-v">0.800 V</div></div>
  <div class="hw-row"><div class="hw-n"><svg><use href="#i-gpu"/></svg>GPU 核心</div><div class="hw-v">0.890 V</div></div>
  <div class="hw-row"><div class="hw-n"><svg><use href="#i-gpu"/></svg>GPU PCIe</div><div class="hw-v">12.286 V</div></div>
  <div class="hw-row"><div class="hw-n"><svg><use href="#i-gpu"/></svg>GPU 12VHPWR</div><div class="hw-v">12.352 V</div></div>
  <div class="hw-row"></div>
  <div class="hw-row hw-g"><div class="hw-n"><svg><use href="#i-volt"/></svg>電流值</div></div>
  <div class="hw-row"><div class="hw-n"><svg><use href="#i-gpu"/></svg>GPU PCIe</div><div class="hw-v">0.55 A</div></div>
  <div class="hw-row"><div class="hw-n"><svg><use href="#i-gpu"/></svg>GPU 12VHPWR</div><div class="hw-v">0.99 A</div></div>
  <div class="hw-row"></div>
  <div class="hw-row hw-g"><div class="hw-n"><svg><use href="#i-volt"/></svg>功耗值</div></div>
  <div class="hw-row"><div class="hw-n"><svg><use href="#i-cpu"/></svg>CPU 封裝</div><div class="hw-v">19.36 W</div></div>
  <div class="hw-row"><div class="hw-n"><svg><use href="#i-cpu"/></svg>CPU IA 核心</div><div class="hw-v">14.63 W</div></div>
  <div class="hw-row"><div class="hw-n"><svg><use href="#i-gpu"/></svg>CPU GT 核心</div><div class="hw-v">4.73 W</div></div>
  <div class="hw-row"><div class="hw-n"><svg><use href="#i-gpu"/></svg>GPU</div><div class="hw-v">19.08 W</div></div>
  <div class="hw-row"><div class="hw-n"><svg><use href="#i-gpu"/></svg>GPU TDP%</div><div class="hw-v">6%</div></div>
  <div class="hw-row"><div class="hw-n"><svg><use href="#i-gpu"/></svg>GPU PCIe</div><div class="hw-v">6.81 W</div></div>
  <div class="hw-row"><div class="hw-n"><svg><use href="#i-gpu"/></svg>GPU 12VHPWR</div><div class="hw-v">12.27 W</div></div>
 </div>
</section>
</main>
<script src="https://cdn.jsdelivr.net/npm/bootstrap@5.3.0/dist/js/bootstrap.bundle.min.js"></script>
</body>
</html>
